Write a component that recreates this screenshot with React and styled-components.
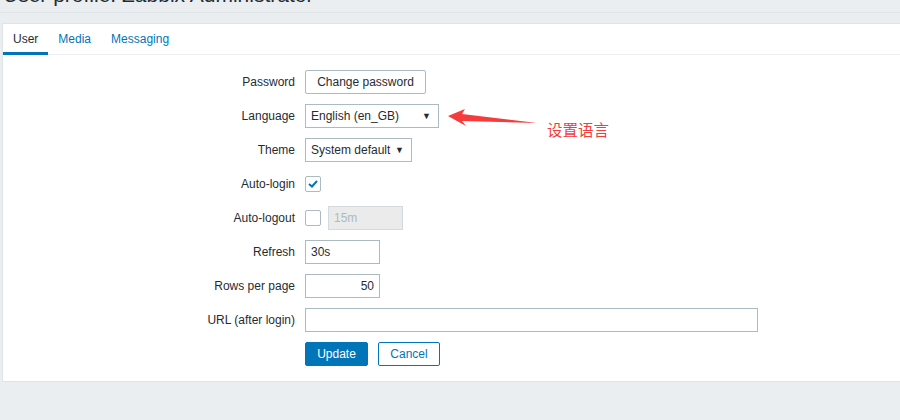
import React from 'react';
import styled, { createGlobalStyle } from 'styled-components';

const GlobalStyle = createGlobalStyle`
  html, body {
    margin: 0;
    padding: 0;
    background: #ebeef1;
    overflow: hidden;
  }
  body {
    font-family: "Liberation Sans", Arial, sans-serif;
    font-size: 12px;
    color: #1f2c33;
  }
`;

const Page = styled.div`
  width: 900px;
  height: 420px;
  overflow: hidden;
  position: relative;
`;

const Header = styled.div`
  margin: -16px 0 0 0;
  padding: 0 0 7px 3px;
  border-bottom: 1px solid #dfe4e7;
  font-size: 21px;
  line-height: 21px;
  white-space: nowrap;
`;

const Panel = styled.div`
  margin: 10px -10px 0 2px;
  background: #fff;
  border: 1px solid #dfe4e7;
`;

const Tabs = styled.div`
  display: flex;
  height: 30px;
  border-bottom: 1px solid #ebeef1;
`;

const Tab = styled.div`
  padding: 0 10px;
  line-height: 30px;
  color: ${p => (p.$active ? '#1f2c33' : '#0275b8')};
  box-shadow: ${p => (p.$active ? 'inset 0 -3px 0 #0275b8' : 'none')};
  margin-bottom: -1px;
  height: 31px;
  box-sizing: border-box;
`;

const Form = styled.div`
  display: grid;
  grid-template-columns: 292px auto;
  column-gap: 10px;
  row-gap: 10px;
  padding: 15px 0 15px;
  align-items: center;
`;

const Label = styled.div`
  text-align: right;
  line-height: 24px;
`;

const Field = styled.div`
  display: flex;
  align-items: center;
  gap: 7px;
  min-height: 24px;
`;

const Button = styled.button`
  height: 24px;
  box-sizing: border-box;
  padding: 0 ${p => p.$pad || 11}px;
  font-family: inherit;
  font-size: 12px;
  border-radius: 2px;
  border: 1px solid ${p => (p.$primary || p.$outline ? '#0275b8' : '#acbbc2')};
  background: ${p => (p.$primary ? '#0275b8' : '#fff')};
  color: ${p => (p.$primary ? '#fff' : p.$outline ? '#0275b8' : '#1f2c33')};
  width: ${p => p.$w}px;
`;

const Select = styled.div`
  height: 24px;
  width: ${p => p.$w}px;
  box-sizing: border-box;
  border: 1px solid #acbbc2;
  display: flex;
  align-items: center;
  justify-content: space-between;
  padding: 0 7px 0 5px;
  &::after {
    content: '▼';
    font-size: 9px;
    color: #1f2c33;
  }
`;

const Input = styled.div`
  height: 24px;
  width: ${p => p.$w}px;
  box-sizing: border-box;
  border: 1px solid ${p => (p.$disabled ? '#d3dadf' : '#acbbc2')};
  background: ${p => (p.$disabled ? '#ebebeb' : '#fff')};
  color: ${p => (p.$disabled ? '#acbbc2' : '#1f2c33')};
  line-height: 22px;
  padding: 0 5px;
  text-align: ${p => (p.$right ? 'right' : 'left')};
`;

const Check = styled.div`
  width: 16px;
  height: 16px;
  box-sizing: border-box;
  border: 1px solid #acbbc2;
  border-radius: 2px;
  background: #fff;
  display: flex;
  align-items: center;
  justify-content: center;
`;

const Actions = styled.div`
  display: flex;
  gap: 10px;
`;

const Note = styled.div`
  position: absolute;
  left: 448px;
  top: 106px;
  display: flex;
  align-items: flex-end;
  gap: 7px;
`;

const NoteText = styled.span`
  font-family: "Noto Sans CJK SC", sans-serif;
  font-size: 15.5px;
  line-height: 20px;
  color: #f53b3b;
  margin-bottom: -13px;
`;

const Arrow = () => (
  <svg width="92" height="20" viewBox="0 0 92 20">
    <polygon
      points="0,10 17,3 14,8 89,17 14,15 18,20"
      fill="#f53b3b"
    />
  </svg>
);

const Tick = () => (
  <svg width="10" height="8" viewBox="0 0 10 8">
    <path d="M1 4 L4 6.5 L9 1" stroke="#0275b8" strokeWidth="2" fill="none" />
  </svg>
);

const App = () => (
  <Page>
    <GlobalStyle />
    <Header>User profile: Zabbix Administrator</Header>
    <Panel>
      <Tabs>
        <Tab $active>User</Tab>
        <Tab>Media</Tab>
        <Tab>Messaging</Tab>
      </Tabs>
      <Form>
        <Label>Password</Label>
        <Field><Button $w={121}>Change password</Button></Field>

        <Label>Language</Label>
        <Field><Select $w={134}>English (en_GB)</Select></Field>

        <Label>Theme</Label>
        <Field><Select $w={107}>System default</Select></Field>

        <Label>Auto-login</Label>
        <Field><Check><Tick /></Check></Field>

        <Label>Auto-logout</Label>
        <Field><Check /><Input $w={75} $disabled>15m</Input></Field>

        <Label>Refresh</Label>
        <Field><Input $w={75}>30s</Input></Field>

        <Label>Rows per page</Label>
        <Field><Input $w={75} $right>50</Input></Field>

        <Label>URL (after login)</Label>
        <Field><Input $w={453} /></Field>

        <div />
        <Actions>
          <Button $primary $w={63}>Update</Button>
          <Button $outline $w={62}>Cancel</Button>
        </Actions>
      </Form>
    </Panel>
    <Note>
      <Arrow />
      <NoteText>设置语言</NoteText>
    </Note>
  </Page>
);

export default App;
